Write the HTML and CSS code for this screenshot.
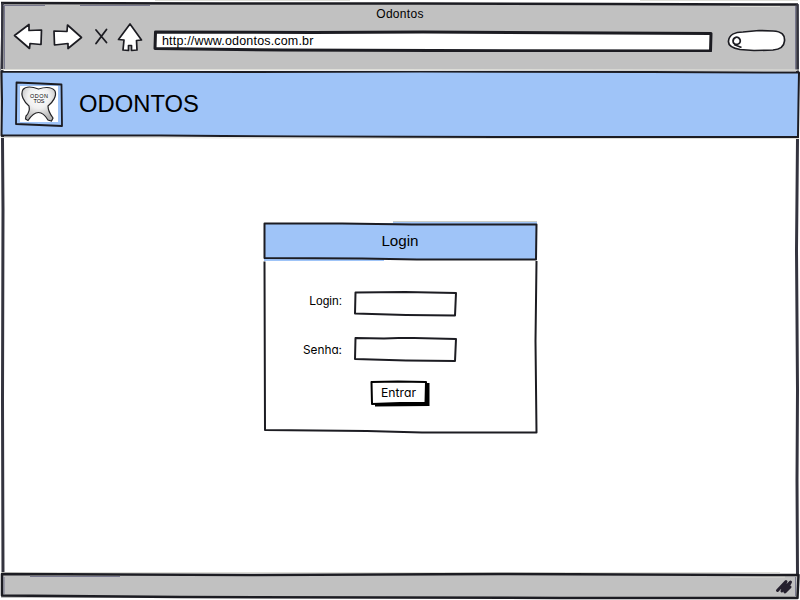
FILE: index.html
```
<!DOCTYPE html>
<html lang="pt-BR">
<head>
<meta charset="utf-8">
<title>Odontos</title>
<link rel="stylesheet" href="styles.css">
</head>
<body>
<div class="browser">
  <svg class="sketch window-edge" viewBox="0 0 800 600" aria-hidden="true">
    <path class="line" d="M3 3 L2 70 L3 210 L2.500 400 L3 575M797 5 L797.500 71 L797.500 139 L796.500 250 L797.500 390 L797 480 L797.500 574"/>
  </svg>
  <header class="chrome">
    <svg class="sketch" viewBox="0 0 800 71" aria-hidden="true">
      <path class="grey" d="M2 3 L797 4 L797 71 L2 70Z"/>
      <path class="line" d="M1 3 L220 3.500 L420 3.500 L610 4 L798 4.500"/>
      <path class="edge" d="M2.500 3 L2 70M797.500 4 V70"/>
      <path class="violet" d="M3 5.500 H45M80 5.500H150M4.500 5 V69M795.500 6 V70"/>
      <path class="pale" d="M155 .500 H350M640 .500 H798M730 6.500H780M1 69.500 H400 L799 70"/>
    </svg>
    <div class="window-title">Odontos</div>
    <div class="toolbar">
      <svg class="nav" viewBox="0 0 140 38" aria-hidden="true">
        <path class="icon" d="M2.500 16.500 L17 5.500 L17 11.500 L29.500 11 L29 25.500 L18 24.500 L17.500 29.500Z"/>
        <path class="icon" d="M42 12 L55 12.500 L55.500 6 L69.500 18.500 L56 29.500 L56 24.500 L42.500 26Z"/>
        <path class="cross" d="M84 11 L94.500 23.500M94.500 10.500 L84 24.500"/>
        <path class="icon" d="M118 5 L129.500 21 L124.500 21.500 L125 31 L119.500 31.500 L119.500 26.500 L116.500 26.500 L116.500 31.500 L111 31 L112 21 L106.500 20.500Z"/>
      </svg>
      <div class="address">
        <svg class="sketch" viewBox="0 0 560 22" aria-hidden="true">
          <path class="address-frame" d="M2.500 2 L160 2.500 L270 2 L558 3.500 L557.500 21 L280 20.500 L130 20 L2 18.500Z"/>
        </svg>
        <span class="url">http://www.odontos.com.br</span>
      </div>
      <svg class="search" viewBox="0 0 62 26" aria-hidden="true">
        <path class="icon" d="M2.500 13 C3 7 9 4 17 4 L33 2.500 L47 3 C56 3.500 59 7 58.500 13 C58 19 54 21.500 47 22 L28 22.500 L14 21.500 C6 20 2 17 2.500 13Z"/>
        <path class="lens" d="M7 13.500 C7 9 12 7.500 14 11.500 C16 16.500 8 18.500 7 13.500M8 16.500 L15.500 19.500"/>
      </svg>
    </div>
  </header>

  <div class="brand">
    <svg class="sketch" viewBox="0 0 800 68" aria-hidden="true">
      <path class="blue-frame" d="M1.500 .500 L250 1 L420 .500 L650 1 L799 1.500 L798.500 30 L798 66 L500 66 L300 65.500 L160 64.500 L1.500 64.500 L2 30Z"/>
      <path class="pale" d="M1 66.500 H120 L400 67.500 H799"/>
    </svg>
    <svg class="logo" viewBox="0 0 50 46" role="img" aria-label="Odontos">
      <defs>
        <radialGradient id="enamel" cx=".5" cy=".3" r=".65">
          <stop offset="0" stop-color="#ffffff"/><stop offset=".5" stop-color="#f0f0f0"/><stop offset="1" stop-color="#b5b5b5"/>
        </radialGradient>
      </defs>
      <path class="white" d="M6 5 H44 V41 H6Z"/>
      <path class="logo-frame" d="M2.500 1.500 L26 2.500 L47.500 3.500 L48 45 L25 44 L2 43Z"/>
      <path class="tooth" fill="url(#enamel)" d="M9 8.500 C12 5 19 6 24.500 8 C31 6 38 6 41 10 C43 15 39 21 34 25 C34 29 36 33 39 37 L37.500 40 L34 39 C31 34 28 31.500 24.500 31.500 C21 31.500 17 35 14 39.500 L11.500 38 L12 35 C15 32 16 29 15 25 C10 21 6 14 9 8.500Z"/>
      <text class="logo-text" x="25" y="17" textLength="18">ODON</text>
      <text class="logo-text" x="25" y="21.500" textLength="11">TOS</text>
    </svg>
    <h1>ODONTOS</h1>
  </div>

  <main class="page">
    <form class="login">
      <svg class="sketch" viewBox="0 0 276 214" aria-hidden="true">
        <path class="tint" d="M2 2 H131 V1 H275 V38 H122 V40 H2Z"/>
        <path class="warm" d="M131 .500 H275"/>
        <path class="line thin" d="M2.500 2.500 L80 2.500 L150 3.500 L274.500 3.500 L274 38.500 L155 38.500 L100 37.500 L2.500 37Z"/>
        <path class="line thin" d="M2.500 40.500 L3 209 L105 210 L160 211.500 L274.500 211.500 L273.500 120 L274.500 40"/>
      </svg>
      <h2>Login</h2>
      <div class="fields">
        <div class="field">
          <label for="login">Login:</label>
          <div class="box">
            <svg class="sketch" viewBox="0 0 104 26" aria-hidden="true"><path class="input-frame" d="M1.500 1.500 L51 1 L102 2 L101 24.500 L52 24 L1 22.500Z"/></svg>
            <input id="login" type="text">
          </div>
        </div>
        <div class="field second">
          <label for="senha">Senha:</label>
          <div class="box">
            <svg class="sketch" viewBox="0 0 104 26" aria-hidden="true"><path class="input-frame" d="M1.500 1 L30 1.500 L51 .800 L102 2 L101 24 L52 23.500 L1 22Z"/></svg>
            <input id="senha" type="password">
          </div>
        </div>
      </div>
      <button type="button">
        <svg class="sketch" viewBox="0 0 60 27" aria-hidden="true">
          <path class="shadow" d="M5 3 H59.500 V26 L5 26.500Z"/>
          <path class="button-frame" d="M1.500 2 L28 1.500 L56 2 L55.500 23 L30 23 L2 24Z"/>
        </svg>
        <span>Entrar</span>
      </button>
    </form>
  </main>

  <footer class="status">
    <svg class="sketch" viewBox="0 0 800 28" aria-hidden="true">
      <path class="grey" d="M1 2 H798 V26 H1Z"/>
      <path class="pale" d="M1 .500 H780M730 5 H785"/>
      <path class="line" d="M2 2 L250 3 L500 2 L798.500 3 L797.500 26 L560 26 L180 25 L2 23.500Z"/>
      <path class="violet" d="M4 5 V22M30 4.500 H120M795.500 5 V24"/>
      <path class="grip" d="M777.500 18.500 L786 9.500 L782 19 L790.500 10 L785 20 L790 15"/>
    </svg>
  </footer>
</div>
</body>
</html>
```

FILE: styles.css
```
* { box-sizing: border-box; }

body {
  margin: 0;
  background: #fff;
  color: #000;
  font-family: "Liberation Sans", Arial, sans-serif;
  font-size: 12px;
}

.browser {
  position: relative;
  display: flex;
  flex-direction: column;
  width: 800px;
  height: 600px;
  overflow: hidden;
}

/* hand-drawn frames lie behind the content of their box */
.sketch {
  position: absolute;
  inset: 0;
  width: 100%;
  height: 100%;
}

.line, .edge, .icon, .address-frame, .blue-frame, .logo-frame, .input-frame,
.button-frame, .cross, .lens, .grip, .pale, .violet, .warm {
  fill: none;
  stroke: #1c1c22;
  stroke-width: 2.5;
  stroke-linejoin: round;
}
.edge { stroke: #34343f; }
.window-edge .line { stroke: #34343f; stroke-width: 3; }
.line.thin { stroke-width: 2; }
.grey { fill: #c1c1c1; }
.white { fill: #fff; }
.tint { fill: #9fc4f8; }
.violet { stroke: #77778d; stroke-width: 1; }
.pale { stroke: #deded8; stroke-width: 1; }
.warm { stroke: #c9cdc6; stroke-width: 1; }
.icon { fill: #fff; stroke-width: 1.7; }
.cross { stroke-width: 1.8; stroke-linecap: round; }
.lens { stroke-width: 1.8; }
.address-frame { fill: #fff; stroke-width: 3; }
.blue-frame { fill: #9fc4f8; stroke-width: 2; }
.logo-frame { stroke-width: 1.8; }
.input-frame { fill: #fff; stroke-width: 2; }
.button-frame { fill: #fff; stroke: #000; stroke-width: 2; }
.shadow { fill: #000; }
.grip { stroke: #25202e; stroke-width: 3; stroke-linecap: round; }

.chrome {
  position: relative;
  flex: none;
  height: 71px;
  padding-top: 7px;
}
.window-title {
  position: relative;
  height: 14px;
  line-height: 14px;
  letter-spacing: .3px;
  text-align: center;
}
.toolbar {
  position: relative;
  display: flex;
  align-items: flex-start;
  padding-left: 12px;
}
.nav {
  width: 140px;
  height: 38px;
  margin-top: -2px;
}
.address {
  position: relative;
  width: 560px;
  height: 22px;
  margin: 9px 0 0 1px;
  padding: 4px 9px;
}
.url {
  position: relative;
  display: block;
  font-size: 12.5px;
  line-height: 15px;
  letter-spacing: .17px;
  white-space: nowrap;
}
.search {
  width: 62px;
  height: 26px;
  margin: 7px 0 0 13px;
}

.brand {
  position: relative;
  display: flex;
  flex: none;
  align-items: flex-start;
  height: 68px;
  padding: 10px 0 0 14px;
}
.logo {
  position: relative;
  width: 50px;
  height: 46px;
}
.tooth { stroke: #222225; stroke-width: 1.2; }
.logo-text {
  font: 5.5px "Liberation Sans", Arial, sans-serif;
  text-anchor: middle;
}
h1 {
  position: relative;
  margin: 9px 0 0 15px;
  font-size: 23.8px;
  font-weight: normal;
  line-height: 28px;
}

.page {
  position: relative;
  flex: 1;
  padding: 82px 0 0 262px;
}
.login {
  position: relative;
  display: flex;
  flex-direction: column;
  width: 276px;
  height: 214px;
}
h2 {
  position: relative;
  margin: 0;
  padding-top: 11px;
  height: 70px;
  font-size: 15.2px;
  font-weight: normal;
  line-height: 18px;
  text-align: center;
}
.fields {
  position: relative;
  display: flex;
  flex-direction: column;
  gap: 20px;
}
.field {
  display: flex;
  height: 26px;
}
label {
  width: 80px;
  padding-top: 3px;
  line-height: 14px;
  text-align: right;
  margin-right: 12px;
}
.second label {
  padding-top: 6px;
  font-family: Inter, "Liberation Sans", sans-serif;
  font-feature-settings: "cv11";
  font-size: 11.8px;
}
.box {
  position: relative;
  width: 104px;
  height: 26px;
}
input {
  position: relative;
  display: block;
  width: 96px;
  height: 18px;
  margin: 4px;
  padding: 0 3px;
  border: 0;
  outline: 0;
  background: transparent;
  font: inherit;
}
button {
  position: relative;
  width: 60px;
  height: 27px;
  margin: 17px 0 0 108px;
  padding: 0 3px 1px 0;
  border: 0;
  background: none;
  color: inherit;
  font: 12.2px/16px Inter, "Liberation Sans", sans-serif;
  font-feature-settings: "cv11";
}
button span { position: relative; }

.status {
  position: relative;
  flex: none;
  height: 28px;
}
```
